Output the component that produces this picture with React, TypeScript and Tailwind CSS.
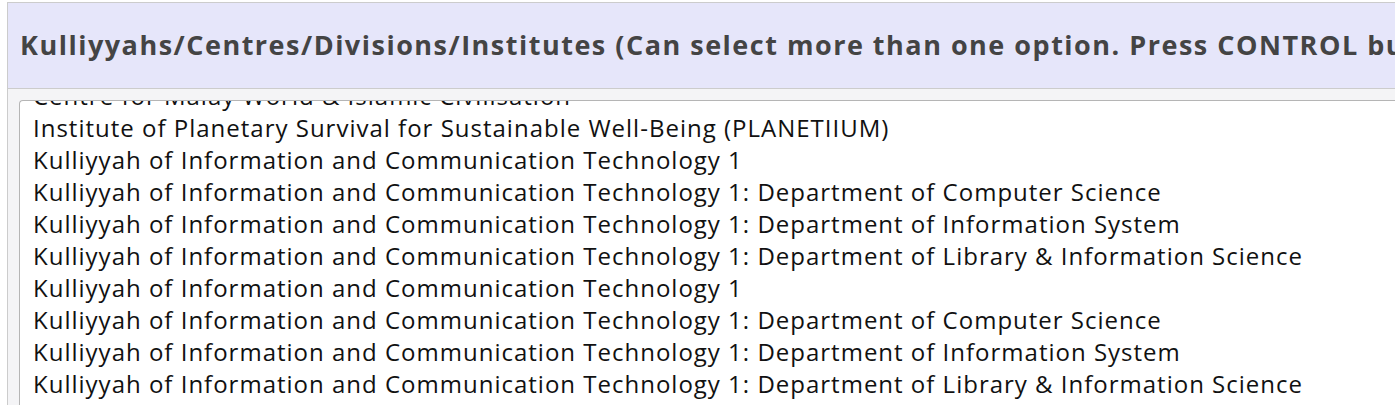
const options = [
  "Centre for Malay World & Islamic Civilisation",
  "Institute of Planetary Survival for Sustainable Well-Being (PLANETIIUM)",
  "Kulliyyah of Information and Communication Technology 1",
  "Kulliyyah of Information and Communication Technology 1: Department of Computer Science",
  "Kulliyyah of Information and Communication Technology 1: Department of Information System",
  "Kulliyyah of Information and Communication Technology 1: Department of Library & Information Science",
  "Kulliyyah of Information and Communication Technology 1",
  "Kulliyyah of Information and Communication Technology 1: Department of Computer Science",
  "Kulliyyah of Information and Communication Technology 1: Department of Information System",
  "Kulliyyah of Information and Communication Technology 1: Department of Library & Information Science",
  "Kulliyyah of Islamic Revealed Knowledge and Human Sciences",
];

export default function App() {
  return (
    <div className="h-[405px] overflow-hidden bg-white pl-[7px] pt-[2px] font-['Open_Sans',sans-serif]">
      <div className="w-[1420px] border-t border-l border-[#cccccc] bg-[#f4f4f6]">
        <div className="flex h-[86px] items-center border-b border-[#cccccc] bg-[#e6e6fa] pl-[12px]">
          <h2 className="whitespace-nowrap text-[27px] font-bold tracking-[1.5px] text-[#444444]">
            Kulliyyahs/Centres/Divisions/Institutes (Can select more than one option. Press CONTROL button to select)
          </h2>
        </div>
        <div className="pl-[11px] pt-[11px]">
          <div className="h-[320px] overflow-hidden rounded-tl-[4px] border-t border-l border-[#b5b5b5] bg-white">
            <ul className="-mt-[21px] pl-[13px]">
              {options.map((option, index) => (
                <li
                  key={index}
                  className="h-[32px] whitespace-nowrap text-[24px] leading-[32px] tracking-[1px] text-[#111111]"
                >
                  {option}
                </li>
              ))}
            </ul>
          </div>
        </div>
      </div>
    </div>
  );
}
